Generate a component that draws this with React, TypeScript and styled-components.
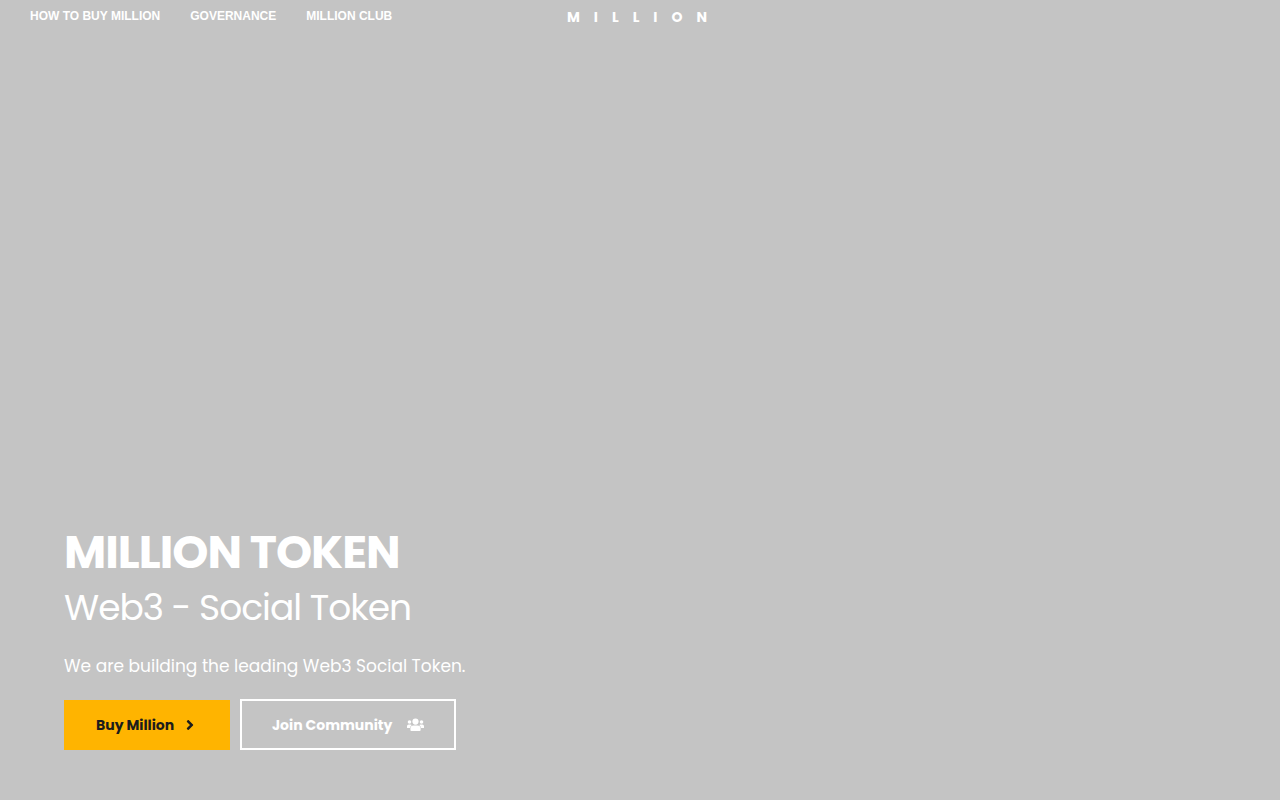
import React from "react";
import styled, { createGlobalStyle } from "styled-components";
import { FaAngleRight } from "react-icons/fa";

const GlobalStyle = createGlobalStyle`
  * { box-sizing: border-box; }
  body { margin: 0; background: #c4c4c4; color: #fff; }
`;

const Page = styled.div`
  min-height: 100vh;
  display: flex;
  flex-direction: column;
  justify-content: space-between;
  font-family: Poppins, Inter, sans-serif;
`;

const Header = styled.header`
  display: grid;
  grid-template-columns: 1fr auto 1fr;
  align-items: start;
  padding: 8px 30px;
`;

const Nav = styled.nav`
  display: flex;
  gap: 30px;
`;

const NavLink = styled.a`
  font: bold 12px/16px "Liberation Sans", Arial, sans-serif;
  color: #fff;
  text-decoration: none;
  text-transform: uppercase;
  white-space: nowrap;
`;

const Logo = styled.a`
  padding-left: 8px;
  font-size: 14px;
  line-height: 18px;
  font-weight: 700;
  letter-spacing: 14px;
  color: #fff;
  text-decoration: none;
`;

const Hero = styled.main`
  padding: 0 64px 50px;
`;

const Title = styled.h1`
  margin: 0;
  font-size: 46px;
  line-height: 56px;
  font-weight: 700;
  letter-spacing: -1px;
`;

const Subtitle = styled.h2`
  margin: 0;
  font-size: 36px;
  line-height: 56px;
  font-weight: 400;
  letter-spacing: -1px;
`;

const Lead = styled.p`
  margin: 15px 0 18px;
  font-size: 17px;
  line-height: 30px;
`;

const Actions = styled.div`
  display: flex;
  flex-wrap: wrap;
  align-items: flex-end;
  gap: 10px;
`;

const Action = styled.a<{ $outline?: boolean }>`
  display: flex;
  align-items: center;
  justify-content: space-between;
  min-width: ${(p) => (p.$outline ? 216 : 166)}px;
  height: ${(p) => (p.$outline ? 51 : 50)}px;
  padding: ${(p) => (p.$outline ? "1px 30px 0" : "0 32px")};
  border: ${(p) => (p.$outline ? "2px solid #fff" : "0")};
  background: ${(p) => (p.$outline ? "transparent" : "#ffb400")};
  color: ${(p) => (p.$outline ? "#fff" : "#1c1c1c")};
  font-size: 14px;
  font-weight: 700;
  text-decoration: none;
  white-space: nowrap;
`;

function UsersIcon() {
  return (
    <svg width="18" height="14" viewBox="0 0 18 14" fill="currentColor" aria-hidden="true">
      <circle cx="9.5" cy="3.6" r="3.1" />
      <circle cx="3.5" cy="4" r="1.8" />
      <circle cx="15.5" cy="4" r="1.8" />
      <path d="M1 10V8.2Q1 6.5 2.7 6.5H4.4Q5.3 6.5 5.8 7Q4.3 8 4 10Z" />
      <path d="M18 10V8.2Q18 6.5 16.3 6.5H14.6Q13.7 6.5 13.2 7Q14.7 8 15 10Z" />
      <path d="M4.4 12V10.6Q4.4 7.5 7.5 7.5H11.5Q14.6 7.5 14.6 10.6V12Q14.6 13 13.6 13H5.4Q4.4 13 4.4 12Z" />
    </svg>
  );
}

export default function App() {
  return (
    <Page>
      <GlobalStyle />
      <Header>
        <Nav>
          <NavLink href="#buy">How to buy Million</NavLink>
          <NavLink href="#governance">Governance</NavLink>
          <NavLink href="#club">Million Club</NavLink>
        </Nav>
        <Logo href="#">MILLION</Logo>
      </Header>
      <Hero>
        <Title>MILLION TOKEN</Title>
        <Subtitle>Web3 - Social Token</Subtitle>
        <Lead>We are building the leading Web3 Social Token.</Lead>
        <Actions>
          <Action href="#buy">
            Buy Million <FaAngleRight size={16} />
          </Action>
          <Action href="#community" $outline>
            Join Community <UsersIcon />
          </Action>
        </Actions>
      </Hero>
    </Page>
  );
}
